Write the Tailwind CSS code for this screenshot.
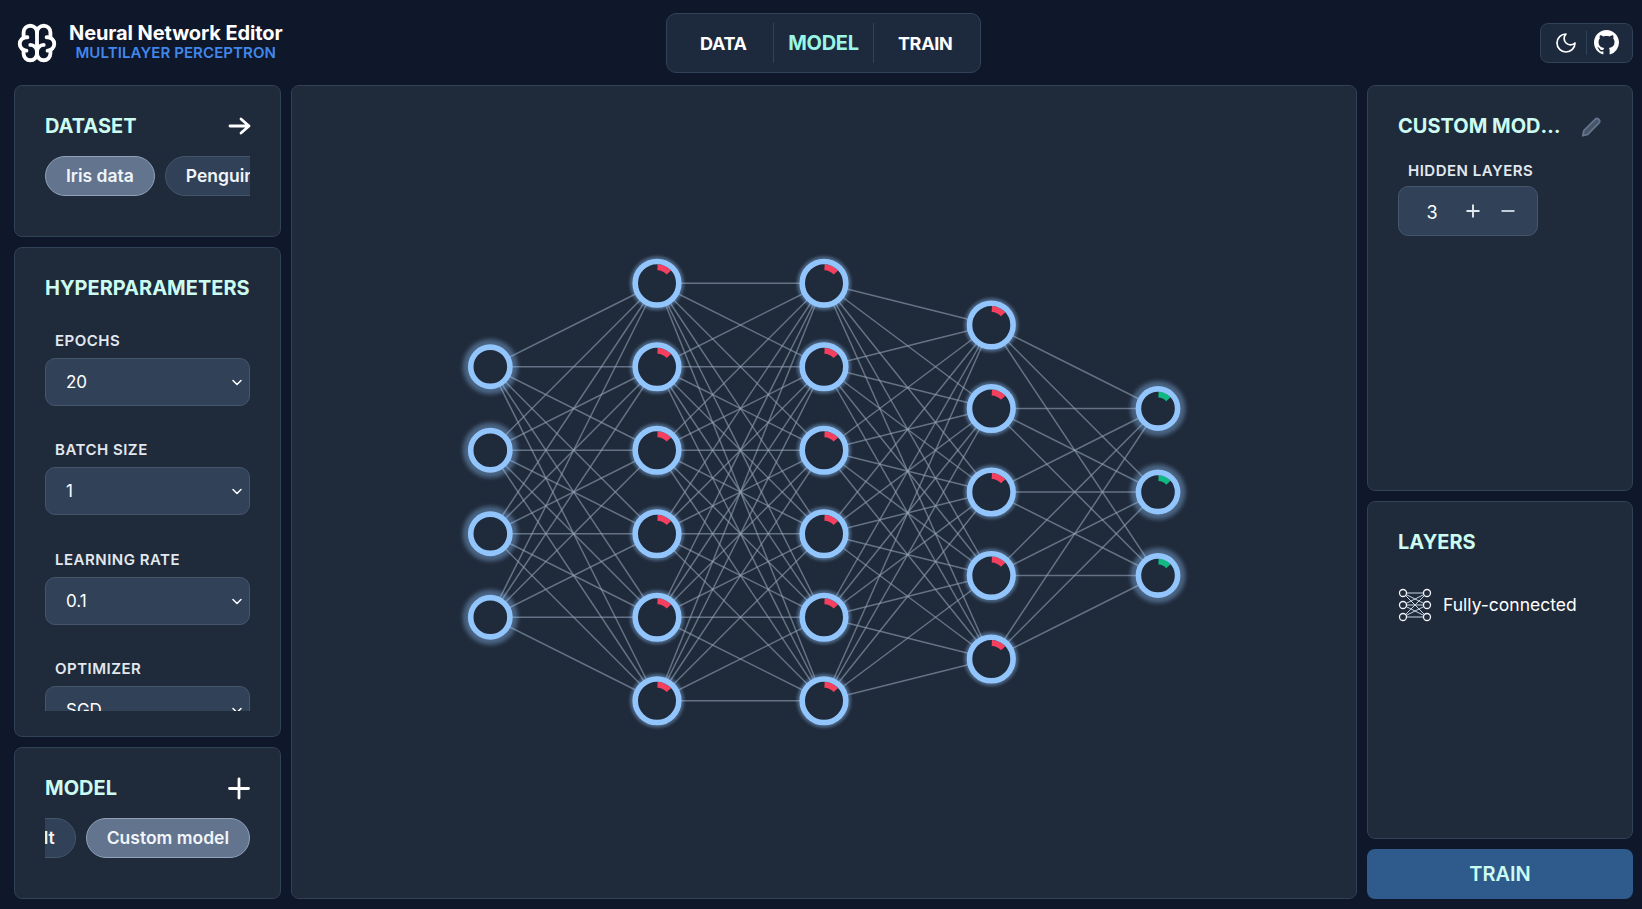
<!doctype html>
<html>
<head>
<meta charset="utf-8">
<script src="https://cdn.jsdelivr.net/npm/@tailwindcss/browser@4"></script>
</head>
<body class="h-[909px] w-[1642px] overflow-hidden bg-[#0f172a] font-['Inter',sans-serif] text-white">
<div class="flex h-full flex-col px-[14px] pb-[10px] pr-[9px]">
  <!-- header -->
  <header class="relative flex h-[85px] shrink-0 items-center justify-between">
    <div class="flex items-center gap-[9px]">
      <svg class="h-[46px] w-[46px]" viewBox="0 0 24 24" fill="none" stroke="white" stroke-width="2" stroke-linecap="round" stroke-linejoin="round">
        <path d="M15.500 13a3.500 3.500 0 0 0 -3.500 3.500v1a3.500 3.500 0 0 0 7 0v-1.800"/>
        <path d="M8.500 13a3.500 3.500 0 0 1 3.500 3.500v1a3.500 3.500 0 0 1 -7 0v-1.800"/>
        <path d="M17.500 16a3.500 3.500 0 0 0 0 -7h-.5"/>
        <path d="M19 9.300v-2.800a3.500 3.500 0 0 0 -7 0"/>
        <path d="M6.500 16a3.500 3.500 0 0 1 0 -7h.5"/>
        <path d="M5 9.300v-2.800a3.500 3.500 0 0 1 7 0v10"/>
      </svg>
      <div class="mb-[2px] flex flex-col items-center leading-none">
        <div class="text-[20px] font-bold leading-[22px] tracking-[-0.1px]">Neural Network Editor</div>
        <div class="text-[15px] font-semibold leading-[17px] tracking-[0.1px] text-[#4287eb]">MULTILAYER PERCEPTRON</div>
      </div>
    </div>
    <nav class="absolute left-[652px] top-[13px] flex h-[60px] w-[315px] items-center justify-center rounded-[10px] border border-slate-700 bg-slate-800 text-[18px] font-bold tracking-[-0.3px]">
      <span class="w-[106px] pl-[7px] text-center">DATA</span>
      <span class="h-[40px] w-[1px] bg-slate-700"></span>
      <span class="w-[100px] text-center text-[20px] text-[#99f6e4]">MODEL</span>
      <span class="h-[40px] w-[1px] bg-slate-700"></span>
      <span class="w-[106px] pr-[4px] text-center">TRAIN</span>
    </nav>
    <div class="flex h-[40px] w-[93px] items-center rounded-[8px] border border-slate-700 bg-slate-800">
      <div class="flex w-[45px] justify-center pl-[4px]">
        <svg class="h-[24px] w-[24px]" viewBox="0 0 24 24" fill="none" stroke="white" stroke-width="1.700" stroke-linecap="round" stroke-linejoin="round"><path d="M12 3a6 6 0 0 0 9 9 9 9 0 1 1 -9 -9z"/></svg>
      </div>
      <span class="h-[24px] w-[1px] bg-slate-700"></span>
      <div class="flex flex-1 justify-center pr-[6px]">
        <svg class="h-[25px] w-[25px]" viewBox="0 0 16 16" fill="white"><path d="M8 0C3.58 0 0 3.58 0 8c0 3.54 2.29 6.53 5.47 7.59.4.07.55-.17.55-.38 0-.19-.01-.82-.01-1.49-2.01.37-2.53-.49-2.69-.94-.09-.23-.48-.94-.82-1.13-.28-.15-.68-.52-.01-.53.63-.01 1.08.58 1.23.82.72 1.21 1.87.87 2.33.66.07-.52.28-.87.51-1.07-1.78-.2-3.64-.89-3.64-3.95 0-.87.31-1.59.82-2.15-.08-.2-.36-1.02.08-2.12 0 0 .67-.21 2.2.82.64-.18 1.32-.27 2-.27s1.36.09 2 .27c1.53-1.04 2.2-.82 2.2-.82.44 1.1.16 1.92.08 2.12.51.56.82 1.27.82 2.15 0 3.07-1.87 3.75-3.65 3.95.29.25.54.73.54 1.48 0 1.07-.01 1.93-.01 2.2 0 .21.15.46.55.38A8.01 8.01 0 0 0 16 8c0-4.42-3.58-8-8-8z"/></svg>
      </div>
    </div>
  </header>

  <main class="flex min-h-0 flex-1 gap-[10px]">
    <!-- left column -->
    <aside class="flex w-[267px] shrink-0 flex-col gap-[10px]">
      <section class="h-[152px] shrink-0 rounded-[8px] border border-slate-700 bg-[#1f2a3a] px-[30px] pt-[26px]">
        <div class="flex h-[28px] items-center justify-between text-[20px] font-bold text-[#ccfbf1]">
          <span>DATASET</span>
          <svg class="h-[24px] w-[24px] overflow-visible" viewBox="0 0 24 24" fill="none" stroke="white" stroke-width="2.800" stroke-linecap="round" stroke-linejoin="round"><path d="M4 12h19M15 5l8 7-8 7"/></svg>
        </div>
        <div class="mt-[16px] flex gap-[10px] overflow-hidden text-[17.500px] font-semibold text-slate-100">
          <span class="flex h-[40px] shrink-0 items-center rounded-full border border-slate-400 bg-slate-500 px-[20px] pt-[1px]">Iris data</span>
          <span class="flex h-[40px] shrink-0 items-center rounded-full border border-slate-600 bg-slate-700 px-[20px] pt-[1px]">Penguins</span>
        </div>
      </section>
      <section class="flex min-h-0 flex-1 flex-col rounded-[8px] border border-slate-700 bg-[#1f2a3a] px-[30px] pb-[25px] pt-[26px]">
        <h2 class="flex h-[28px] shrink-0 items-center text-[20px] font-bold text-[#ccfbf1]">HYPERPARAMETERS</h2>
        <div class="mt-[22px] flex min-h-0 flex-1 flex-col overflow-hidden">
          <div class="shrink-0">
            <label class="block h-[34px] pl-[10px] pt-[8px] text-[15px] font-semibold leading-[18px] tracking-[0.5px] text-slate-200">EPOCHS</label>
            <div class="relative">
              <select class="h-[48px] w-full appearance-none rounded-[10px] border border-slate-600 bg-slate-700 px-[20px] pt-[2px] text-[17px] text-white"><option>20</option></select>
              <svg class="absolute right-[8px] top-[20px] h-[9px] w-[10px]" viewBox="0 0 10 9" fill="none" stroke="white" stroke-width="1.500" stroke-linecap="round" stroke-linejoin="round"><path d="M1 2.500l4 4 4-4"/></svg>
            </div>
          </div>
          <div class="mt-[27px] shrink-0">
            <label class="block h-[34px] pl-[10px] pt-[8px] text-[15px] font-semibold leading-[18px] tracking-[0.5px] text-slate-200">BATCH SIZE</label>
            <div class="relative">
              <select class="h-[48px] w-full appearance-none rounded-[10px] border border-slate-600 bg-slate-700 px-[20px] pt-[2px] text-[17px] text-white"><option>1</option></select>
              <svg class="absolute right-[8px] top-[20px] h-[9px] w-[10px]" viewBox="0 0 10 9" fill="none" stroke="white" stroke-width="1.500" stroke-linecap="round" stroke-linejoin="round"><path d="M1 2.500l4 4 4-4"/></svg>
            </div>
          </div>
          <div class="mt-[28px] shrink-0">
            <label class="block h-[34px] pl-[10px] pt-[8px] text-[15px] font-semibold leading-[18px] tracking-[0.5px] text-slate-200">LEARNING RATE</label>
            <div class="relative">
              <select class="h-[48px] w-full appearance-none rounded-[10px] border border-slate-600 bg-slate-700 px-[20px] pt-[2px] text-[17px] text-white"><option>0.1</option></select>
              <svg class="absolute right-[8px] top-[20px] h-[9px] w-[10px]" viewBox="0 0 10 9" fill="none" stroke="white" stroke-width="1.500" stroke-linecap="round" stroke-linejoin="round"><path d="M1 2.500l4 4 4-4"/></svg>
            </div>
          </div>
          <div class="mt-[27px] shrink-0">
            <label class="block h-[34px] pl-[10px] pt-[8px] text-[15px] font-semibold leading-[18px] tracking-[0.5px] text-slate-200">OPTIMIZER</label>
            <div class="relative">
              <select class="h-[48px] w-full appearance-none rounded-[10px] border border-slate-600 bg-slate-700 px-[20px] pt-[2px] text-[17px] text-white"><option>SGD</option></select>
              <svg class="absolute right-[8px] top-[20px] h-[9px] w-[10px]" viewBox="0 0 10 9" fill="none" stroke="white" stroke-width="1.500" stroke-linecap="round" stroke-linejoin="round"><path d="M1 2.500l4 4 4-4"/></svg>
            </div>
          </div>
        </div>
      </section>
      <section class="h-[152px] shrink-0 rounded-[8px] border border-slate-700 bg-[#1f2a3a] px-[30px] pt-[26px]">
        <div class="flex h-[28px] items-center justify-between text-[20px] font-bold text-[#ccfbf1]">
          <span>MODEL</span>
          <svg class="h-[24px] w-[24px] overflow-visible" viewBox="0 0 24 24" fill="none" stroke="white" stroke-width="2.800" stroke-linecap="round"><path d="M13 3v19M3.500 12.500h19"/></svg>
        </div>
        <div class="mt-[16px] flex justify-end gap-[10px] overflow-hidden text-[17.500px] font-semibold text-slate-100">
          <span class="flex h-[40px] shrink-0 items-center rounded-full border border-slate-600 bg-slate-700 px-[20px] pt-[1px]">Default</span>
          <span class="flex h-[40px] shrink-0 items-center rounded-full border border-slate-400 bg-slate-500 px-[20px] pt-[1px]">Custom model</span>
        </div>
      </section>
    </aside>

    <!-- canvas -->
    <section class="relative min-w-0 flex-1 rounded-[8px] border border-slate-700 bg-[#1f2a3a]">
      <svg id="net" class="absolute left-[-1px] top-[-1px]" width="1066" height="814" viewBox="291 85 1066 814"></svg>
    </section>

    <!-- right column -->
    <aside class="flex w-[266px] shrink-0 flex-col gap-[10px]">
      <section class="h-[406px] shrink-0 rounded-[8px] border border-slate-700 bg-[#1f2a3a] px-[30px] pt-[26px]">
        <div class="flex h-[28px] items-center justify-between">
          <span class="w-[165px] truncate text-[20px] font-bold text-[#ccfbf1]">CUSTOM MODEL</span>
          <svg class="mt-[1px] h-[22px] w-[22px]" viewBox="0 0 24 24" fill="#475569" stroke="#64748b" stroke-width="2" stroke-linejoin="round"><path d="M3 21.500l1.200-5.500L16.500 3.700a2.800 2.800 0 0 1 4 4L8.500 20z"/></svg>
        </div>
        <div class="mt-[21px] pl-[10px] text-[15px] font-semibold leading-[20px] tracking-[0.5px] text-slate-200">HIDDEN LAYERS</div>
        <div class="mt-[5px] flex h-[50px] w-[140px] items-center rounded-[10px] border border-slate-600 bg-slate-700 text-[18px]">
          <span class="ml-[26px] w-[14px] pt-[2px] text-center">3</span>
          <svg class="ml-[26px] h-[16px] w-[16px]" viewBox="0 0 16 16" fill="none" stroke="#e2e8f0" stroke-width="1.900"><path d="M1.500 8h13M8 1.500v13"/></svg>
          <svg class="ml-[19px] h-[16px] w-[16px]" viewBox="0 0 16 16" fill="none" stroke="#cbd5e1" stroke-width="1.900"><path d="M1.500 8h13"/></svg>
        </div>
      </section>
      <section class="min-h-0 flex-1 rounded-[8px] border border-slate-700 bg-[#1f2a3a] px-[30px] pt-[26px]">
        <h2 class="flex h-[28px] items-center text-[20px] font-bold text-[#ccfbf1]">LAYERS</h2>
        <div class="mt-[32px] flex items-center gap-[11px]">
          <svg class="h-[34px] w-[34px]" viewBox="0 0 34 34" fill="none" stroke="#e5e7eb" stroke-width="1"><g stroke="#cbd5e1"><path d="M5 5h24M5 17h24M5 29h24M5 5l24 12M5 5l24 24M5 17l24-12M5 17l24 12M5 29l24-24M5 29l24-12"/></g><g fill="#1f2a3a" stroke="#f1f5f9" stroke-width="1.300"><circle cx="5" cy="5" r="3.500"/><circle cx="5" cy="17" r="3.500"/><circle cx="5" cy="29" r="3.500"/><circle cx="29" cy="5" r="3.500"/><circle cx="29" cy="17" r="3.500"/><circle cx="29" cy="29" r="3.500"/></g></svg>
          <span class="text-[17.500px]">Fully-connected</span>
        </div>
      </section>
      <button class="flex h-[50px] shrink-0 items-center justify-center rounded-[8px] bg-[#2f5b8c] text-[20px] font-semibold text-[#ccfbf1]">TRAIN</button>
    </aside>
  </main>
</div>
<script>
(function(){
  var NS='http://www.w3.org/2000/svg', svg=document.getElementById('net');
  var xs=[490.3,657,824,991.3,1158], counts=[4,6,6,5,3], dy=83.5, cy=492;
  function el(n,a){var e=document.createElementNS(NS,n);for(var k in a)e.setAttribute(k,a[k]);return e;}
  var defs=el('defs',{});
  var f1=el('filter',{id:'g1',x:'-60%',y:'-60%',width:'220%',height:'220%'});f1.appendChild(el('feGaussianBlur',{stdDeviation:'2'}));
  var f2=el('filter',{id:'g2',x:'-60%',y:'-60%',width:'220%',height:'220%'});f2.appendChild(el('feGaussianBlur',{stdDeviation:'1.5'}));
  defs.appendChild(f1);defs.appendChild(f2);svg.appendChild(defs);
  var layers=xs.map(function(x,i){var n=counts[i],o=[];for(var j=0;j<n;j++)o.push([x,cy+(j-(n-1)/2)*dy]);return o;});
  for(var i=0;i<4;i++)layers[i].forEach(function(a){layers[i+1].forEach(function(b){
    svg.appendChild(el('line',{x1:a[0],y1:a[1],x2:b[0],y2:b[1],stroke:'#94a3b8','stroke-opacity':'0.6','stroke-width':'1.500'}));
  });});
  layers.forEach(function(l,i){
    var outer=(i==0||i==4), r=outer?19.6:21.8;
    l.forEach(function(p){
      var x=p[0],y=p[1];
      svg.appendChild(el('circle',{cx:x,cy:y,r:outer?27.5:27,fill:'#93c5fd','fill-opacity':'0.38',filter:outer?'url(#g1)':'url(#g2)'}));
      svg.appendChild(el('circle',{cx:x,cy:y,r:r,fill:'#1f2a3a'}));
      if(i>0){
        var ar=outer?14:16,sw=6,a=48*Math.PI/180;
        svg.appendChild(el('path',{d:'M'+(x+0.5)+' '+(y-ar)+'A'+ar+' '+ar+' 0 0 1 '+(x+ar*Math.sin(a))+' '+(y-ar*Math.cos(a)),fill:'none',stroke:i==4?'#10b981':'#f43f5e','stroke-width':sw}));
      }
      svg.appendChild(el('circle',{cx:x,cy:y,r:r,fill:'none',stroke:'#93c5fd','stroke-width':'5.600'}));
    });
  });
})();
</script>
</body>
</html>
